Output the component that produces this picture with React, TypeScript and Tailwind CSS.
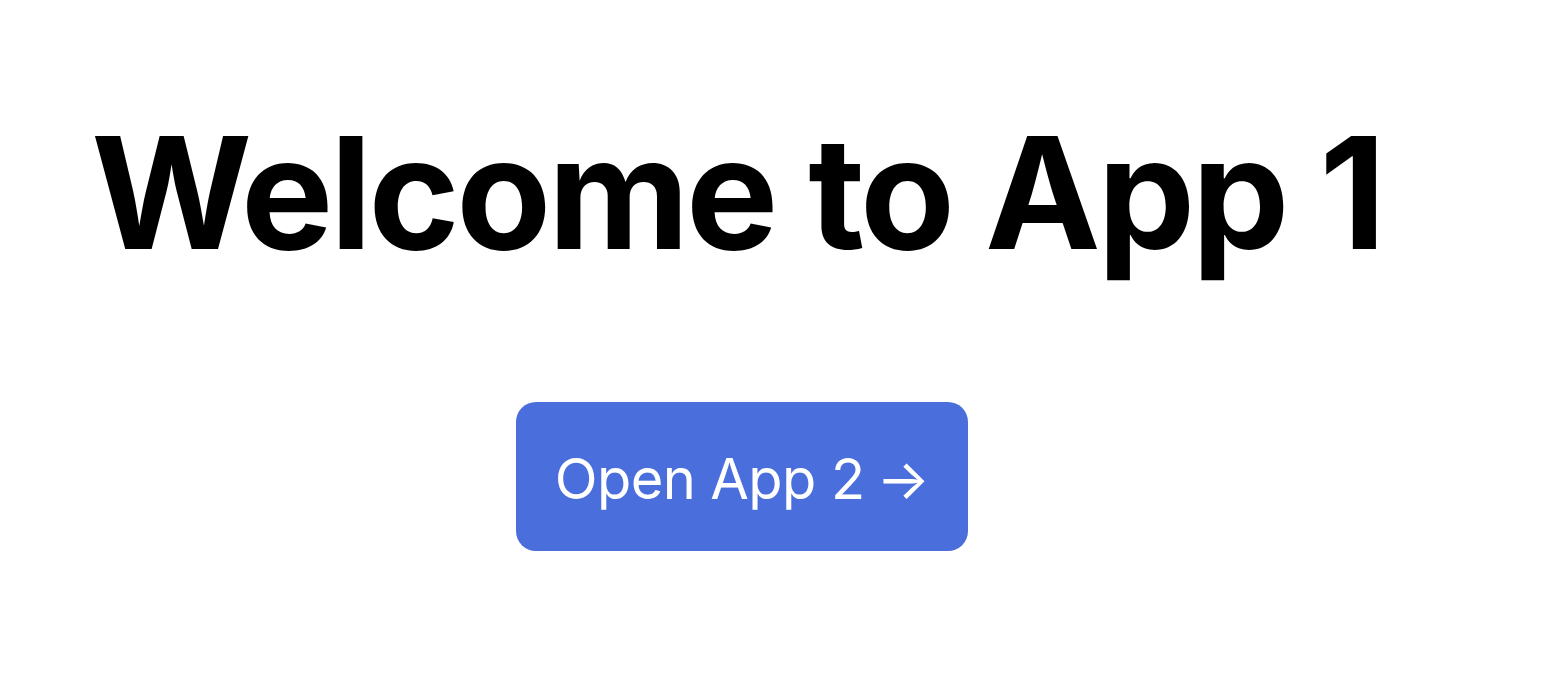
export default function App() {
  return (
    <div className="min-h-[678px] w-full bg-white font-['Inter',sans-serif]">
      <div className="flex flex-col items-center pr-[72px] pt-[100px]">
        <h1 className="mr-[10px] text-[155px] font-bold leading-[186px] tracking-[-3.4px] text-black">
          Welcome to App 1
        </h1>
        <button className="mt-[116px] flex h-[149px] w-[452px] items-center justify-center gap-[12px] rounded-[20px] bg-[#4a6edb] pt-[4px] text-[56px] tracking-[-0.6px] text-white">
          <span>Open App 2</span>
          <span>→</span>
        </button>
      </div>
    </div>
  );
}
